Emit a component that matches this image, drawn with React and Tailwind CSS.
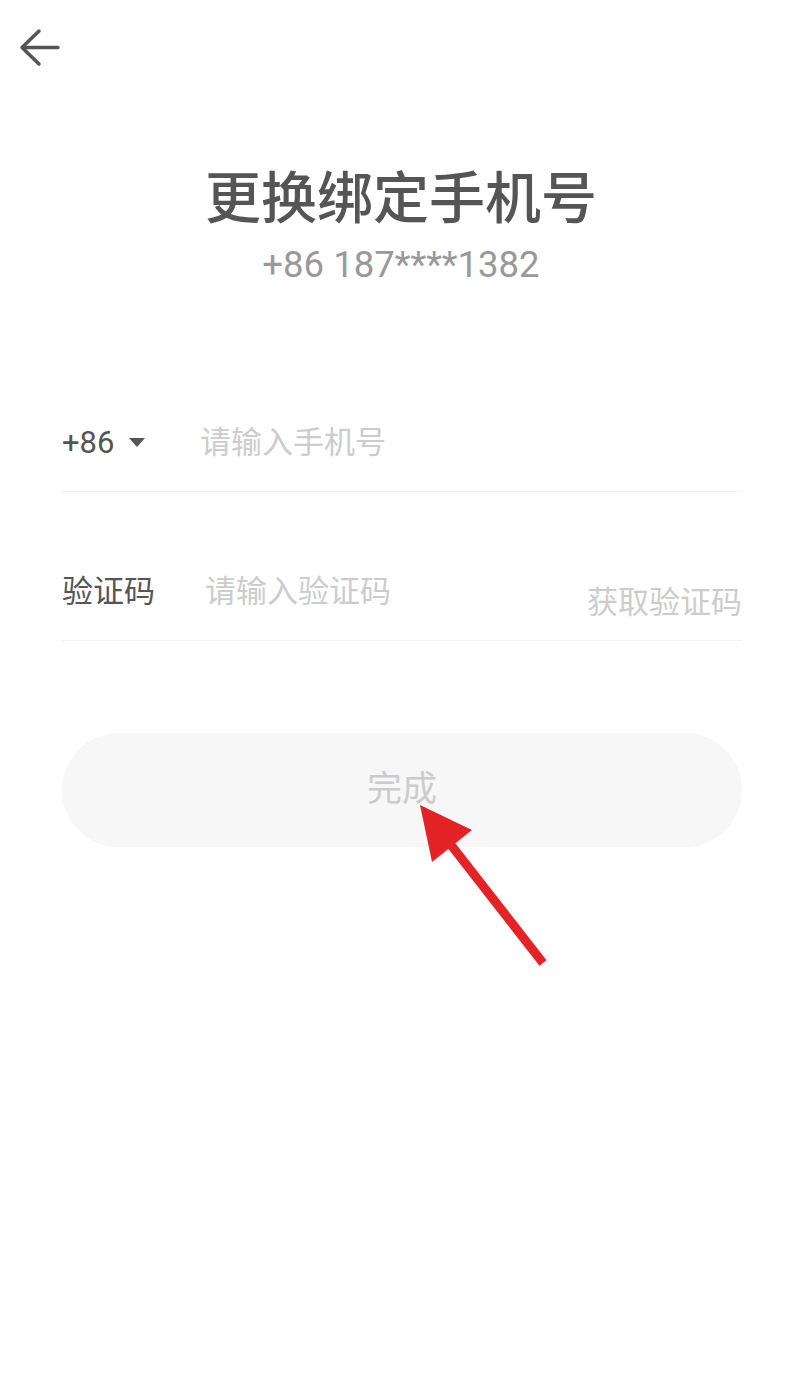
import React from 'react';

const BackIcon = () => (
    <svg width="48" height="48" viewBox="0 0 48 48" fill="none">
        <path
            d="M25 8 L8 24.5 L25 41 M8 24.5 H44"
            stroke="#555555"
            strokeWidth="3.5"
            strokeLinecap="round"
            strokeLinejoin="round"
        />
    </svg>
);

const App = () => {
    return (
        <div
            className="relative w-full min-h-[1386px] bg-white text-[#555555]"
            style={{ fontFamily: 'Roboto, "Noto Sans CJK SC", sans-serif' }}
        >
            {/* Header */}
            <div className="pl-[14px] pt-[23px]">
                <BackIcon />
            </div>

            {/* Title */}
            <h1 className="mt-[100px] pl-[6px] text-center text-[56px] leading-[56px] font-medium text-[#555555]">
                更换绑定手机号
            </h1>
            <p className="mt-[19px] pl-[6px] text-center text-[36.5px] leading-[37px] text-[#999999]">
                +86 187****1382
            </p>

            {/* Form */}
            <div className="mt-[111px] pl-[62px] pr-[54px]">
                <div className="flex items-center h-[98px] border-b border-[#f3f3f3]">
                    <div className="flex items-center w-[138px]">
                        <span className="text-[31px] leading-[36px] text-[#555555]">+86</span>
                        <span className="ml-[15px] w-0 h-0 border-l-[8px] border-r-[8px] border-t-[9px] border-l-transparent border-r-transparent border-t-[#555555]" />
                    </div>
                    <span className="text-[31px] leading-[36px] text-[#cccccc]">请输入手机号</span>
                </div>

                <div className="mt-[51px] flex items-center h-[98px] border-b border-[#f3f3f3]">
                    <span className="w-[143px] text-[31px] leading-[36px] text-[#555555]">验证码</span>
                    <span className="flex-1 text-[31px] leading-[36px] text-[#cccccc]">请输入验证码</span>
                    <span className="mt-[22px] text-[31px] leading-[36px] text-[#cccccc]">获取验证码</span>
                </div>

                <button className="mt-[92px] w-full h-[114px] rounded-full bg-[#f7f7f7] text-[35px] text-[#cccccc] flex items-center justify-center">
                    完成
                </button>
            </div>

            {/* Annotation arrow */}
            <svg
                className="absolute left-0 top-0 pointer-events-none"
                width="796"
                height="1386"
                viewBox="0 0 796 1386"
            >
                <line x1="451" y1="845" x2="543" y2="963" stroke="#e42326" strokeWidth="9" />
                <polygon points="420,805 432,862 472,830" fill="#e42326" />
            </svg>
        </div>
    );
};

export default App;
